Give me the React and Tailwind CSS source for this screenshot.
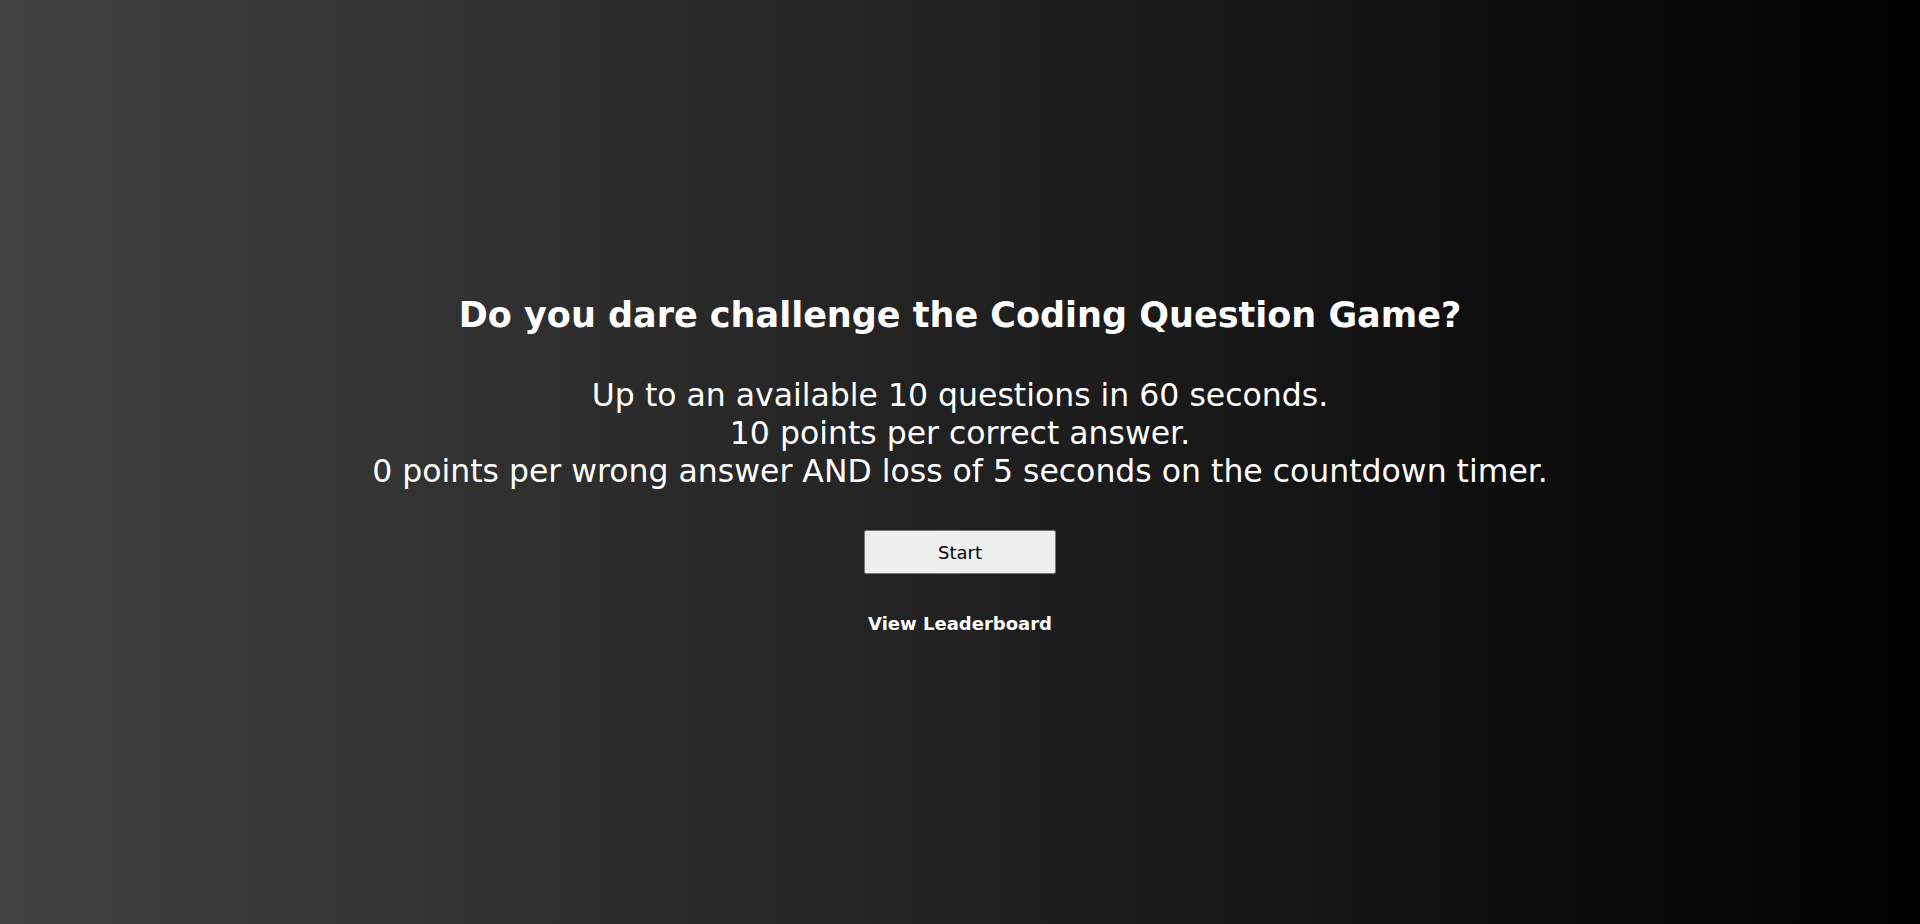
export default function App() {
  return (
    <div className="min-h-screen w-full pt-[6px] bg-[linear-gradient(to_right,#414141,#000000)] flex flex-col items-center justify-center text-white font-['DejaVu_Sans',sans-serif]">
      <h1 className="text-[35px] leading-[42px] font-bold">Do you dare challenge the Coding Question Game?</h1>
      <div className="mt-[40px] text-[31.5px] leading-[38px] text-center">
        <p>Up to an available 10 questions in 60 seconds.</p>
        <p>10 points per correct answer.</p>
        <p>0 points per wrong answer AND loss of 5 seconds on the countdown timer.</p>
      </div>
      <button className="mt-[40px] w-[192px] h-[44px] bg-[#efefef] border border-[#767676] rounded-[2px] text-black text-[18px]">
        Start
      </button>
      <a className="mt-[38px] text-[18px] leading-[24px] font-bold cursor-pointer">View Leaderboard</a>
    </div>
  );
}
